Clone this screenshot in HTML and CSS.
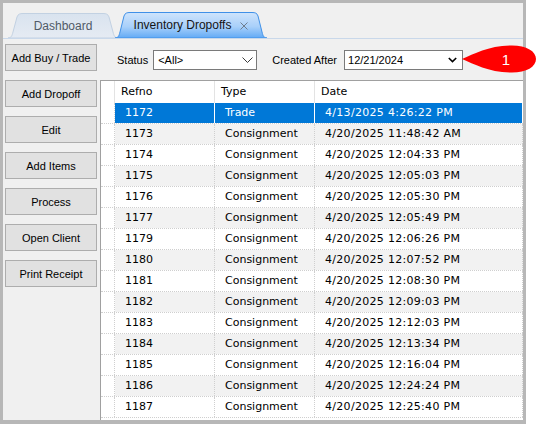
FILE: index.html
```html
<!DOCTYPE html>
<html lang="en">
<head>
  <meta charset="utf-8">
  <title>Inventory Dropoffs</title>
  <link rel="stylesheet" href="styles.css">
</head>
<body>
  <div class="window">
    <div class="tabstrip">
      <div class="tab tab-dash">
        <svg class="tab-shape" viewBox="0 0 110 25" preserveAspectRatio="none">
          <defs>
            <linearGradient id="gDash" x1="0" y1="0" x2="0" y2="1">
              <stop offset="0" stop-color="#d9e3ef"/>
              <stop offset="1" stop-color="#e5ebf3"/>
            </linearGradient>
          </defs>
          <path d="M0,25 C3,25 4,23 5,19 L9,4 C10,1 12,0.5 15,0.5 L95,0.5 C98,0.5 100,1 101,4 L105,19 C106,23 107,25 110,25 Z"
                fill="url(#gDash)" stroke="#c2d1e2"/>
        </svg>
        <span class="tab-label">Dashboard</span>
      </div>
      <div class="tab tab-active">
        <svg class="tab-shape" viewBox="0 0 152 26" preserveAspectRatio="none">
          <defs>
            <linearGradient id="gActive" x1="0" y1="0" x2="0" y2="1">
              <stop offset="0" stop-color="#cfe4fc"/>
              <stop offset="0.55" stop-color="#a9d0fa"/>
              <stop offset="1" stop-color="#62aaf5"/>
            </linearGradient>
          </defs>
          <path d="M0,26 C3,26 4,24 5,20 L9,4 C10,1 12,0.5 15,0.5 L137,0.5 C140,0.5 142,1 143,4 L147,20 C148,24 149,26 152,26 Z"
                fill="url(#gActive)" stroke="#3f90e8"/>
        </svg>
        <span class="tab-label">Inventory Dropoffs</span>
        <svg class="tab-close" width="8" height="8" viewBox="0 0 8 8">
          <path d="M0.5,0.5 L7.5,7.5 M7.5,0.5 L0.5,7.5" stroke="#6f7d8e" stroke-width="1"/>
        </svg>
      </div>
    </div>

    <div class="page">
      <div class="side">
        <button class="btn">Add Buy / Trade</button>
        <button class="btn">Add Dropoff</button>
        <button class="btn">Edit</button>
        <button class="btn">Add Items</button>
        <button class="btn">Process</button>
        <button class="btn">Open Client</button>
        <button class="btn">Print Receipt</button>
      </div>

      <div class="main">
        <div class="filters">
          <span class="flabel">Status</span>
          <div class="select select-status">
            <span>&lt;All&gt;</span>
            <svg width="11" height="6" viewBox="0 0 11 6">
              <path d="M0.5,0.5 L5.5,5.5 L10.5,0.5" fill="none" stroke="#3a3a3a"/>
            </svg>
          </div>
          <span class="flabel flabel-date">Created After</span>
          <div class="select select-date">
            <span>12/21/2024</span>
            <svg width="9" height="6" viewBox="0 0 9 6">
              <path d="M0.8,1 L4.5,4.6 L8.2,1" fill="none" stroke="#000" stroke-width="1.6"/>
            </svg>
          </div>
        </div>

        <div class="grid">
          <div class="grid-head">
            <div></div>
            <div>Refno</div>
            <div>Type</div>
            <div>Date</div>
          </div>
          <div class="row sel"><div></div><div>1172</div><div>Trade</div><div>4/13/2025 4:26:22 PM</div></div>
          <div class="row alt"><div></div><div>1173</div><div>Consignment</div><div>4/20/2025 11:48:42 AM</div></div>
          <div class="row"><div></div><div>1174</div><div>Consignment</div><div>4/20/2025 12:04:33 PM</div></div>
          <div class="row alt"><div></div><div>1175</div><div>Consignment</div><div>4/20/2025 12:05:03 PM</div></div>
          <div class="row"><div></div><div>1176</div><div>Consignment</div><div>4/20/2025 12:05:30 PM</div></div>
          <div class="row alt"><div></div><div>1177</div><div>Consignment</div><div>4/20/2025 12:05:49 PM</div></div>
          <div class="row"><div></div><div>1179</div><div>Consignment</div><div>4/20/2025 12:06:26 PM</div></div>
          <div class="row alt"><div></div><div>1180</div><div>Consignment</div><div>4/20/2025 12:07:52 PM</div></div>
          <div class="row"><div></div><div>1181</div><div>Consignment</div><div>4/20/2025 12:08:30 PM</div></div>
          <div class="row alt"><div></div><div>1182</div><div>Consignment</div><div>4/20/2025 12:09:03 PM</div></div>
          <div class="row"><div></div><div>1183</div><div>Consignment</div><div>4/20/2025 12:12:03 PM</div></div>
          <div class="row alt"><div></div><div>1184</div><div>Consignment</div><div>4/20/2025 12:13:34 PM</div></div>
          <div class="row"><div></div><div>1185</div><div>Consignment</div><div>4/20/2025 12:16:04 PM</div></div>
          <div class="row alt"><div></div><div>1186</div><div>Consignment</div><div>4/20/2025 12:24:24 PM</div></div>
          <div class="row"><div></div><div>1187</div><div>Consignment</div><div>4/20/2025 12:25:40 PM</div></div>
        </div>
      </div>
    </div>
  </div>

  <!-- numbered marker pointing at the date filter -->
  <svg class="callout" width="76" height="30" viewBox="0 0 76 30">
    <path d="M2,15 C14,10 28,2 50,1.5 C66,1 76,7 76,15 C76,23 66,29 50,28.5 C28,28 14,20 2,15 Z" fill="#ff0000"/>
    <text x="46" y="20.5" text-anchor="middle" class="callout-num">1</text>
  </svg>
</body>
</html>
```

FILE: styles.css
```css
body {
  margin: 0;
  position: relative;
  background: #fff;
  font-family: "Liberation Sans", Arial, sans-serif;
  font-size: 11px;
  color: #000;
}
.window {
  width: 526px;
  height: 424px;
  box-sizing: border-box;
  border: 3px solid #b7b7b7;
  border-bottom-width: 4px;
  background: #f0f0f0;
  display: flex;
  flex-direction: column;
}

/* tabs */
.tabstrip {
  height: 35px;
  flex: none;
  display: flex;
  align-items: flex-end;
  padding-left: 5px;
  border-bottom: 1px solid #c9d8ea;
}
.tab {
  position: relative;
  display: flex;
  align-items: center;
  justify-content: center;
  font-size: 12px;
}
.tab-shape {
  position: absolute;
  left: 0;
  top: 0;
  width: 100%;
  height: 100%;
}
.tab-label,
.tab-close {
  position: relative;
}
.tab-dash {
  width: 110px;
  height: 25px;
  color: #505a67;
}
.tab-active {
  width: 152px;
  height: 26px;
  margin-left: -3px;
  gap: 9px;
  color: #141414;
}
.tab-close {
  margin-top: 1px;
}

/* body of the tab */
.page {
  flex: 1;
  display: flex;
  min-height: 0;
}
.side {
  width: 97px;
  flex: none;
  box-sizing: border-box;
  padding: 5px 3px 0 2px;
  display: flex;
  flex-direction: column;
  gap: 9px;
}
.btn {
  height: 27px;
  box-sizing: border-box;
  border: 1px solid #adadad;
  background: #e1e1e1;
  font-family: "Liberation Sans", Arial, sans-serif;
  font-size: 11px;
  color: #000;
  padding: 0;
}
.main {
  flex: 1;
  display: flex;
  flex-direction: column;
  min-width: 0;
}

/* filter bar */
.filters {
  height: 41px;
  flex: none;
  display: flex;
  align-items: center;
  padding-left: 17px;
}
.flabel {
  margin-right: 5px;
}
.flabel-date {
  margin-left: 15px;
  margin-right: 7px;
}
.select {
  height: 20px;
  box-sizing: border-box;
  border: 1px solid #7a7a7a;
  background: #fff;
  display: flex;
  align-items: center;
  justify-content: space-between;
  padding: 0 3px 0 4px;
}
.select-status {
  width: 104px;
}
.select-date {
  width: 119px;
  padding-right: 5px;
  padding-left: 3px;
}

/* data grid */
.grid {
  flex: 1;
  min-height: 0;
  overflow: hidden;
  background: #fff;
  border-top: 1px solid #a0a0a0;
  border-left: 1px solid #a0a0a0;
  font-family: "DejaVu Sans", Verdana, sans-serif;
  font-size: 11px;
}
.grid-head,
.row {
  display: grid;
  grid-template-columns: 14px 100px 100px 1fr;
}
.grid-head {
  height: 22px;
  line-height: 22px;
}
.grid-head > div {
  border-right: 1px solid #e3e3e3;
  padding-left: 6px;
}
.grid-head > div:last-child {
  border-right: 0;
}
.row {
  height: 21px;
  box-sizing: border-box;
  border-bottom: 1px dotted #cfcfcf;
  line-height: 20px;
}
.row > div {
  border-right: 1px dotted #cfcfcf;
  padding-left: 10px;
  white-space: nowrap;
}
.row > div:last-child {
  letter-spacing: 0.3px;
}
.grid-head > div:first-child,
.row > div:first-child {
  padding: 0;
}
.row.alt > div + div {
  background: #f2f2f2;
}
.row.sel > div + div {
  background: #0078d7;
  color: #fff;
  border-right: 1px solid #fff;
}

/* marker */
.callout {
  position: absolute;
  left: 460px;
  top: 44px;
}
.callout-num {
  fill: #fff;
  font-family: "Liberation Sans", Arial, sans-serif;
  font-size: 15px;
}
```
